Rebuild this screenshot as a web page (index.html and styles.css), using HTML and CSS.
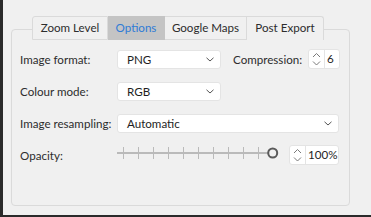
FILE: index.html
```html
<!DOCTYPE html>
<html>
<head>
<meta charset="utf-8">
<link rel="stylesheet" href="styles.css">
</head>
<body>
<div class="window">
  <div class="tabwidget">
    <div class="tabbar">
      <div class="tab">Zoom Level</div>
      <div class="tab active">Options</div>
      <div class="tab">Google Maps</div>
      <div class="tab">Post Export</div>
    </div>
    <div class="panel">
      <div class="row">
        <div class="label">Image format:</div>
        <div class="combo combo-short"><span>PNG</span><svg class="chev" width="8" height="5" viewBox="0 0 8 5"><path d="M0.5 0.8 L4 4 L7.5 0.8" fill="none" stroke="#555" stroke-width="1"/></svg></div>
        <div class="label label-mid">Compression:</div>
        <div class="spin spin-small">
          <div class="arrows"><svg width="9" height="15" viewBox="0 0 9 15"><path d="M1 5 L4.5 1.5 L8 5" fill="none" stroke="#7a7a7a" stroke-width="1"/><path d="M1 9.5 L4.5 13 L8 9.5" fill="none" stroke="#7a7a7a" stroke-width="1"/></svg></div>
          <div class="val">6</div>
        </div>
      </div>
      <div class="row">
        <div class="label">Colour mode:</div>
        <div class="combo combo-short"><span>RGB</span><svg class="chev" width="8" height="5" viewBox="0 0 8 5"><path d="M0.5 0.8 L4 4 L7.5 0.8" fill="none" stroke="#555" stroke-width="1"/></svg></div>
      </div>
      <div class="row">
        <div class="label">Image resampling:</div>
        <div class="combo combo-full"><span>Automatic</span><svg class="chev" width="8" height="5" viewBox="0 0 8 5"><path d="M0.5 0.8 L4 4 L7.5 0.8" fill="none" stroke="#555" stroke-width="1"/></svg></div>
      </div>
      <div class="row">
        <div class="label">Opacity:</div>
        <svg class="slider" width="172" height="20" viewBox="0 0 172 20">
          <rect x="0" y="7" width="152" height="2" fill="#bababa"/>
          <g stroke="#bababa" stroke-width="1">
            <line x1="6.5" y1="2" x2="6.5" y2="14"/>
            <line x1="21.5" y1="2" x2="21.5" y2="14"/>
            <line x1="36.5" y1="2" x2="36.5" y2="14"/>
            <line x1="51.5" y1="2" x2="51.5" y2="14"/>
            <line x1="66.5" y1="2" x2="66.5" y2="14"/>
            <line x1="81.5" y1="2" x2="81.5" y2="14"/>
            <line x1="96.5" y1="2" x2="96.5" y2="14"/>
            <line x1="111.5" y1="2" x2="111.5" y2="14"/>
            <line x1="126.5" y1="2" x2="126.5" y2="14"/>
            <line x1="141.5" y1="2" x2="141.5" y2="14"/>
          </g>
          <circle cx="155.7" cy="8" r="4.5" fill="#f0f0f0" stroke="#5a5a5a" stroke-width="2"/>
        </svg>
        <div class="spin spin-wide">
          <div class="arrows"><svg width="9" height="15" viewBox="0 0 9 15"><path d="M1 5 L4.5 1.5 L8 5" fill="none" stroke="#7a7a7a" stroke-width="1"/><path d="M1 9.5 L4.5 13 L8 9.5" fill="none" stroke="#7a7a7a" stroke-width="1"/></svg></div>
          <div class="val">100%</div>
        </div>
      </div>
    </div>
  </div>
</div>
</body>
</html>
```

FILE: styles.css
```css
html, body {
  margin: 0;
  padding: 0;
  width: 371px;
  height: 217px;
  overflow: hidden;
  background: #2a2a2a;
}
.window {
  box-sizing: border-box;
  width: 368px;
  height: 215px;
  margin-left: 3px;
  background: #f0f0f0;
  font-family: Lato, "Noto Sans", sans-serif;
  font-size: 11.6px;
  color: #2d2d2d;
  padding-top: 16px;
  padding-left: 8px;
}
.tabwidget {
  width: 339px;
}
.tabbar {
  position: relative;
  z-index: 1;
  display: flex;
  margin-left: 21px;
  height: 24px;
}
.tab {
  box-sizing: border-box;
  flex: none;
  height: 24px;
  line-height: 22px;
  border: 1px solid #dadada;
  border-left: none;
  background: #f0f0f0;
  white-space: nowrap;
  text-align: center;
}
.tab:nth-child(1) {
  width: 76px;
  border-left: 1px solid #dadada;
  border-top-left-radius: 3px;
}
.tab:nth-child(2) { width: 57px; }
.tab:nth-child(3) { width: 82px; }
.tab:nth-child(4) {
  width: 77px;
  border-top-right-radius: 3px;
  border-bottom: none;
}
.tab.active {
  background: #c4c4c4;
  color: #2f7bd6;
  border-color: #c4c4c4;
}
.panel {
  box-sizing: border-box;
  margin-top: -11px;
  height: 177px;
  border: 1px solid #dadada;
  border-radius: 4px;
  padding: 19px 9px 0 8px;
  display: flex;
  flex-direction: column;
  gap: 12px;
}
.row {
  display: flex;
  align-items: center;
  height: 20px;
}
.label {
  width: 97px;
  flex: none;
  white-space: nowrap;
}
.label-mid {
  width: 75px;
  margin-left: 12px;
}
.combo {
  box-sizing: border-box;
  flex: none;
  height: 19px;
  background: #ffffff;
  border: 1px solid #e4e4e4;
  border-radius: 3px;
  display: flex;
  align-items: center;
  justify-content: space-between;
  padding: 0 6px 0 9px;
  color: #1e1e1e;
}
.combo-short { width: 104px; }
.combo-full { width: 222px; }
.chev { flex: none; }
.slider {
  flex: none;
  align-self: flex-start;
}
.spin {
  box-sizing: border-box;
  flex: none;
  height: 20px;
  display: flex;
  background: #ffffff;
  border: 1px solid #e4e4e4;
  border-radius: 3px;
  color: #1e1e1e;
}
.spin-small { width: 32px; }
.spin-wide { width: 50px; }
.arrows {
  width: 15px;
  border-right: 1px solid #e4e4e4;
  display: flex;
  align-items: center;
  justify-content: center;
}
.val {
  padding-left: 2px;
  line-height: 18px;
}
```
